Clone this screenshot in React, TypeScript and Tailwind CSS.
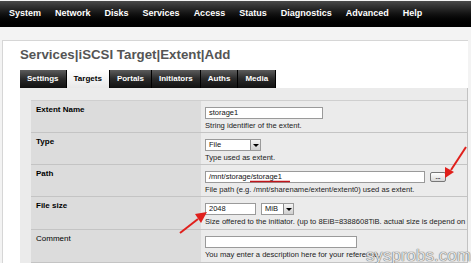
const navItems = ["System", "Network", "Disks", "Services", "Access", "Status", "Diagnostics", "Advanced", "Help"];
const tabs = ["Settings", "Targets", "Portals", "Initiators", "Auths", "Media"];

function DropBtn() {
  return (
    <div className="flex h-full w-[10px] items-center justify-center border-l border-[#8a8a8a] bg-linear-to-b from-[#f4f4f4] to-[#cfcfcf]">
      <div className="h-0 w-0 border-x-[3px] border-t-[3px] border-x-transparent border-t-black" />
    </div>
  );
}

function Input({ w, value }: { w: string; value?: string }) {
  return (
    <div className={`${w} flex h-[12px] items-center border border-[#9a9a9a] bg-white pl-[3px] text-[7.5px] text-[#111]`}>
      {value}
    </div>
  );
}

function Select({ w, value }: { w: string; value: string }) {
  return (
    <div className={`${w} flex h-[12px] items-center justify-between border border-[#9a9a9a] bg-white text-[7.5px] text-[#111]`}>
      <span className="pl-[3px]">{value}</span>
      <DropBtn />
    </div>
  );
}

function Row({ label, bold = true, h, children, help }: { label: string; bold?: boolean; h: string; children: React.ReactNode; help: string }) {
  return (
    <div className={`flex ${h} border-b border-[#c4c4c4]`}>
      <div className={`w-[170px] shrink-0 bg-[#dcdcdc] pl-[5px] pt-[4px] text-[8px] leading-[10px] text-black ${bold ? "font-bold" : ""}`}>
        {label}
      </div>
      <div className="flex-1 overflow-hidden pl-[4px] pt-[6px]">
        <div className="flex items-center gap-[5px]">{children}</div>
        <div className="mt-[2px] whitespace-nowrap text-[7.6px] leading-[10px] text-[#222]">{help}</div>
      </div>
    </div>
  );
}

export default function App() {
  return (
    <div className="relative h-[263px] w-[471px] overflow-hidden bg-[#f3f3f3] font-['Liberation_Sans',Arial,sans-serif]">
      <div className="mt-[1px] flex h-[26px] items-center gap-[14px] bg-linear-to-b from-[#4a4a4a] via-[#121212] to-black pl-[9px]">
        {navItems.map((n) => (
          <span key={n} className="text-[9px] font-bold text-white">
            {n}
          </span>
        ))}
      </div>
      <div className="pl-[2px] pt-[13px]">
        <div className="mr-[3px] border-l border-t border-[#d6d6d6] bg-white pl-[17px] pt-[6px]">
          <div className="text-[13.3px] font-bold leading-[16px] text-[#555]">Services|iSCSI Target|Extent|Add</div>
          <div className="mt-[7px] flex h-[18px] items-stretch">
            {tabs.map((t) => (
              <div
                key={t}
                className={`flex items-center border-r border-black px-[7px] text-[8px] font-bold ${
                  t === "Targets"
                    ? "bg-linear-to-b from-white to-[#e8e8e8] text-black"
                    : "bg-linear-to-b from-[#5c5c5c] via-[#2a2a2a] to-[#111] text-white"
                }`}
              >
                {t}
              </div>
            ))}
          </div>
          <div className="border-r border-[#c2c2c2] bg-[#ebebeb] pl-[11px] pt-[12px]">
            <div className="border-t border-[#cfcfcf]">
              <Row label="Extent Name" h="h-[32px]" help="String identifier of the extent.">
                <Input w="w-[118px]" value="storage1" />
              </Row>
              <Row label="Type" h="h-[32px]" help="Type used as extent.">
                <Select w="w-[56px]" value="File" />
              </Row>
              <Row label="Path" h="h-[32px]" help="File path (e.g. /mnt/sharename/extent/extent0) used as extent.">
                <Input w="w-[220px]" value="/mnt/storage/storage1" />
                <div className="flex h-[10px] w-[16px] items-end justify-center rounded-[2px] border border-[#777] bg-linear-to-b from-white to-[#d8d8d8] pb-[1px] text-[6px] font-bold leading-[6px] text-black">
                  ...
                </div>
              </Row>
              <Row label="File size" h="h-[33px]" help="Size offered to the initiator. (up to 8EiB=8388608TiB. actual size is depend on your disks.)">
                <Input w="w-[51px]" value="2048" />
                <Select w="w-[33px]" value="MiB" />
              </Row>
              <Row label="Comment" bold={false} h="h-[33px]" help="You may enter a description here for your reference.">
                <Input w="w-[152px]" />
              </Row>
            </div>
          </div>
        </div>
      </div>

      <div className="absolute bottom-[-5px] left-[366px] text-[17px] text-[#e2e2e2] [text-shadow:0_0_1px_#555,0_0_1px_#777]">sysprobs.com</div>

      <svg className="pointer-events-none absolute inset-0" width="471" height="263" viewBox="0 0 471 263">
        <line x1="250" y1="181.5" x2="290" y2="181.5" stroke="#c0141a" strokeWidth="1.5" />
        <line x1="466" y1="147" x2="451" y2="170" stroke="#e0201c" strokeWidth="2" />
        <polygon points="445,178 445,167 454,172" fill="#e0201c" />
        <line x1="180" y1="233" x2="198" y2="219" stroke="#e0201c" strokeWidth="2" />
        <polygon points="207,212 195,214 201,223" fill="#e0201c" />
      </svg>
    </div>
  );
}
